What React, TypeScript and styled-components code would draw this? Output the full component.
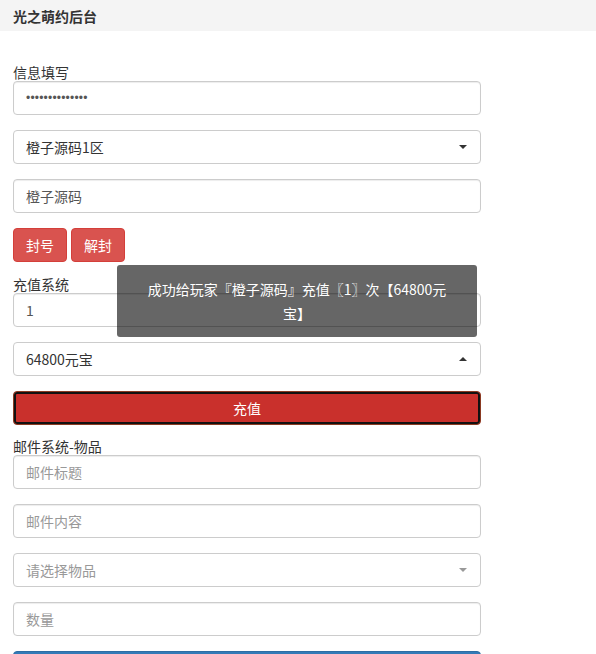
import styled, { createGlobalStyle } from "styled-components";

const GlobalStyle = createGlobalStyle`
  html, body {
    margin: 0;
    padding: 0;
    background: #fff;
    overflow: hidden;
  }
  body {
    font-family: "Microsoft YaHei", "Noto Sans CJK SC", "Noto Sans", sans-serif;
    font-size: 14px;
    color: #333;
  }
  * {
    box-sizing: border-box;
  }
`;

const Page = styled.div`
  position: relative;
  width: 596px;
  height: 654px;
`;

const Header = styled.div`
  height: 31px;
  background: #f4f4f4;
  padding: 0 13px;
  display: flex;
  align-items: center;
  font-weight: bold;
  font-size: 14px;
  color: #333;
`;

const Form = styled.div`
  width: 494px;
  padding: 32px 13px 0;
  display: flex;
  flex-direction: column;
`;

const Label = styled.div<{ $top?: number }>`
  line-height: 18px;
  height: 18px;
  margin-top: ${(p) => p.$top ?? 0}px;
  color: #333;
`;

const Input = styled.input<{ $secret?: boolean }>`
  display: block;
  width: 100%;
  height: 34px;
  padding: 6px 12px;
  margin-bottom: 15px;
  font-family: inherit;
  font-size: 14px;
  color: #555;
  background: #fff;
  border: 1px solid #ccc;
  border-radius: 4px;
  box-shadow: inset 0 1px 1px rgba(0, 0, 0, 0.075);
  outline: none;

  &::placeholder {
    color: #999;
  }
  ${(p) =>
    p.$secret
      ? `font-family: "Liberation Sans", sans-serif; font-size: 12px; letter-spacing: 0.2px;`
      : ""}
`;

const Select = styled.div<{ $placeholder?: boolean }>`
  display: flex;
  align-items: center;
  justify-content: space-between;
  height: 34px;
  padding: 0 12px;
  margin-bottom: 15px;
  border: 1px solid #ccc;
  border-radius: 4px;
  background: #fff;
  color: ${(p) => (p.$placeholder ? "#999" : "#333")};
`;

const Caret = styled.span<{ $up?: boolean; $muted?: boolean }>`
  width: 0;
  height: 0;
  margin-right: 1px;
  border-left: 4px solid transparent;
  border-right: 4px solid transparent;
  ${(p) =>
    p.$up
      ? `border-bottom: 4px solid ${p.$muted ? "#999" : "#333"};`
      : `border-top: 4px solid ${p.$muted ? "#999" : "#333"};`}
`;

const ButtonRow = styled.div`
  display: flex;
  gap: 4px;
`;

const Button = styled.button<{ $variant?: "danger" | "active" | "primary"; $block?: boolean }>`
  height: 34px;
  padding: 6px 12px;
  font-family: inherit;
  font-size: 14px;
  color: #fff;
  border-radius: 4px;
  cursor: pointer;
  width: ${(p) => (p.$block ? "100%" : "auto")};
  background: ${(p) =>
    p.$variant === "primary" ? "#337ab7" : p.$variant === "active" ? "#c9302c" : "#d9534f"};
  border: 1px solid
    ${(p) =>
      p.$variant === "primary" ? "#2e6da4" : p.$variant === "active" ? "#8a3a22" : "#d43f3a"};
  ${(p) => (p.$variant === "active" ? "box-shadow: inset 0 0 0 2px #111;" : "")}
`;

const Toast = styled.div`
  position: absolute;
  top: 265px;
  left: 117px;
  width: 360px;
  padding: 12px 28px;
  background: rgba(0, 0, 0, 0.6);
  border-radius: 3px;
  color: #fff;
  font-size: 14px;
  line-height: 24px;
  text-align: center;
`;

export default function App() {
  return (
    <>
      <GlobalStyle />
      <Page>
        <Header>光之萌约后台</Header>
        <Form>
          <Label>信息填写</Label>
          <Input $secret readOnly value="••••••••••••••" />
          <Select>
            <span>橙子源码1区</span>
            <Caret />
          </Select>
          <Input readOnly value="橙子源码" />
          <ButtonRow>
            <Button>封号</Button>
            <Button>解封</Button>
          </ButtonRow>

          <Label $top={13}>充值系统</Label>
          <Input readOnly value="1" />
          <Select>
            <span>64800元宝</span>
            <Caret $up />
          </Select>
          <Button $variant="active" $block>
            充值
          </Button>

          <Label $top={12}>邮件系统-物品</Label>
          <Input placeholder="邮件标题" />
          <Input placeholder="邮件内容" />
          <Select $placeholder>
            <span>请选择物品</span>
            <Caret $muted />
          </Select>
          <Input placeholder="数量" />
          <Button $variant="primary" $block>
            发送
          </Button>
        </Form>
        <Toast>成功给玩家『橙子源码』充值〖1〗次【64800元宝】</Toast>
      </Page>
    </>
  );
}
